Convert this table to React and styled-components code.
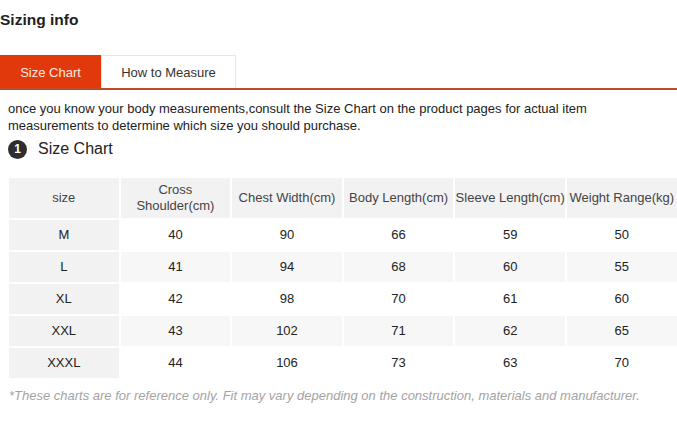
import React from "react";
import styled, { createGlobalStyle } from "styled-components";

const GlobalStyle = createGlobalStyle`
  body {
    margin: 0;
    background: #fff;
    font-family: "Liberation Sans", Arial, sans-serif;
    color: #333;
  }
`;

const Page = styled.div`
  width: 677px;
  height: 428px;
  overflow: hidden;
  padding-top: 10px;
  box-sizing: border-box;
`;

const Title = styled.h2`
  margin: 0;
  font-size: 15.5px;
  line-height: 20px;
  font-weight: bold;
  color: #222;
`;

const TabBar = styled.div`
  display: flex;
  margin-top: 25px;
  border-bottom: 2px solid #c0492a;
`;

const Tab = styled.div`
  height: 33px;
  box-sizing: border-box;
  display: flex;
  align-items: center;
  justify-content: center;
  font-size: 13px;
  width: ${p => p.width}px;
  background: ${p => (p.active ? "#e2390c" : "#fff")};
  color: ${p => (p.active ? "#fde8e0" : "#333")};
  border: 1px solid ${p => (p.active ? "#e2390c" : "#e6e6e6")};
  border-bottom: none;
`;

const Intro = styled.p`
  margin: 10px 0 0 8px;
  font-size: 13px;
  line-height: 17px;
  color: #222;
`;

const Heading = styled.div`
  display: flex;
  align-items: center;
  gap: 11px;
  margin: 5px 0 0 8px;
  height: 20px;
  font-size: 16px;
  color: #222;
`;

const Badge = styled.span`
  width: 19px;
  height: 19px;
  border-radius: 50%;
  background: #2e2e2e;
  color: #fff;
  font-size: 12px;
  font-weight: bold;
  display: flex;
  align-items: center;
  justify-content: center;
`;

const Table = styled.div`
  display: grid;
  grid-template-columns: repeat(6, 109.6px);
  gap: 2px;
  margin: 19px 0 0 9px;
`;

const Cell = styled.div`
  height: ${p => (p.head ? 40 : 30)}px;
  display: flex;
  align-items: center;
  justify-content: center;
  text-align: center;
  white-space: nowrap;
  font-size: 13px;
  line-height: 16px;
  color: ${p => (p.head ? "#444" : "#222")};
  background: ${p => (p.shade ? "#f2f2f2" : p.soft ? "#f7f7f7" : "#fff")};
`;

const Note = styled.p`
  margin: 9px 0 0 9px;
  font-size: 13px;
  line-height: 17px;
  font-style: italic;
  color: #a3a3a3;
`;

const headers = [
  "size",
  <>Cross<br />Shoulder(cm)</>,
  "Chest Width(cm)",
  "Body Length(cm)",
  "Sleeve Length(cm)",
  "Weight Range(kg)"
];

const rows = [
  ["M", 40, 90, 66, 59, 50],
  ["L", 41, 94, 68, 60, 55],
  ["XL", 42, 98, 70, 61, 60],
  ["XXL", 43, 102, 71, 62, 65],
  ["XXXL", 44, 106, 73, 63, 70]
];

export default function App() {
  return (
    <Page>
      <GlobalStyle />
      <Title>Sizing info</Title>
      <TabBar>
        <Tab active width={101}>Size Chart</Tab>
        <Tab width={135}>How to Measure</Tab>
      </TabBar>
      <Intro>
        once you know your body measurements,consult the Size Chart on the product pages for actual item
        <br />
        measurements to determine which size you should purchase.
      </Intro>
      <Heading>
        <Badge>1</Badge>
        Size Chart
      </Heading>
      <Table>
        {headers.map((h, j) => (
          <Cell key={j} head shade>
            {h}
          </Cell>
        ))}
        {rows.map((row, i) =>
          row.map((v, j) => (
            <Cell key={`${i}-${j}`} shade={j === 0} soft={i % 2 === 1}>
              {v}
            </Cell>
          ))
        )}
      </Table>
      <Note>
        *These charts are for reference only. Fit may vary depending on the construction, materials and manufacturer.
      </Note>
    </Page>
  );
}
